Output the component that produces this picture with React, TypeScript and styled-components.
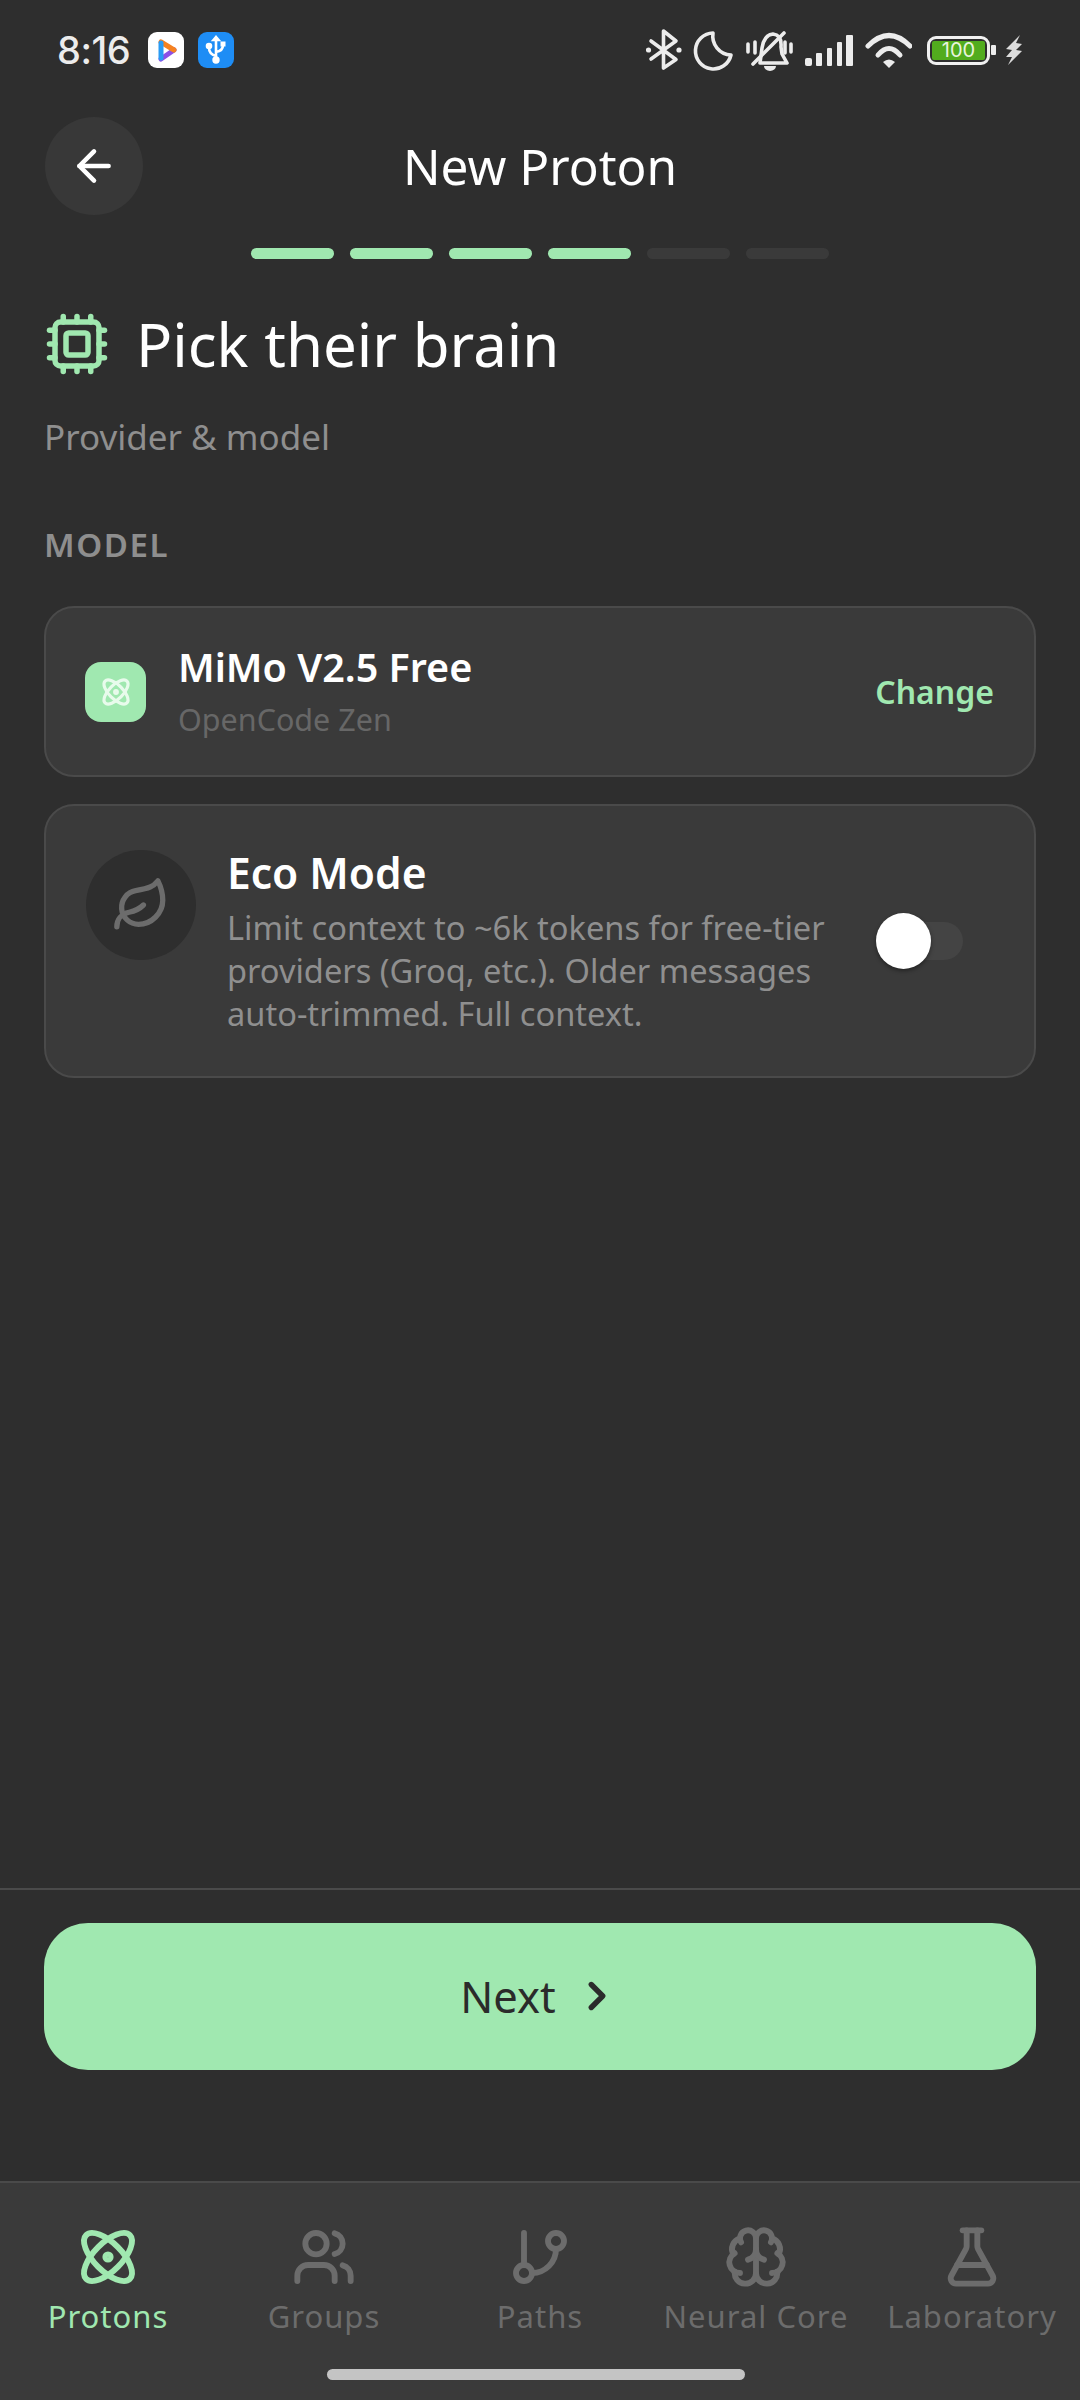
import React from "react";
import styled, { createGlobalStyle } from "styled-components";
import { ArrowLeft, ChevronRight, Cpu, Atom, Users, GitBranch, Brain, FlaskConical, Leaf } from "lucide-react";

const Global = createGlobalStyle`
  html, body { margin: 0; padding: 0; background: #2e2e2e; }
  * { box-sizing: border-box; }
`;

const FONT = `"Noto Sans", "Open Sans", sans-serif`;
const GREEN = "#a0e8b0";

const Page = styled.div`
  width: 1080px;
  height: 2400px;
  background: #2e2e2e;
  display: flex;
  flex-direction: column;
  font-family: ${FONT};
  color: #fff;
  overflow: hidden;
`;

const StatusBar = styled.div`
  height: 100px;
  padding: 0 57px;
  display: flex;
  align-items: center;
  justify-content: space-between;
`;
const StatusLeft = styled.div`
  display: flex;
  align-items: center;
`;
const Time = styled.span`
  font-family: "Inter", sans-serif;
  font-size: 38px;
  font-weight: 500;
  letter-spacing: -0.5px;
  color: #ececec;
  width: 91px;
`;
const AppBadge = styled.div<{ $bg: string; $gap: number }>`
  width: 36px;
  height: 36px;
  border-radius: 9px;
  background: ${(p) => p.$bg};
  margin-right: ${(p) => p.$gap}px;
  display: flex;
  align-items: center;
  justify-content: center;
`;
const StatusIconRow = styled.div`
  display: flex;
  align-items: center;
`;
const Battery = styled.div`
  display: flex;
  width: 63px;
  height: 29px;
  margin-left: 15px;
  padding: 2px;
  border: 3px solid #f0f0f0;
  border-radius: 9px;
`;
const BatteryFill = styled.div`
  flex: 1;
  background: #52ac1e;
  border-radius: 2px;
  color: #e9f4dd;
  font-family: "Inter", sans-serif;
  font-size: 20px;
  line-height: 19px;
  text-align: center;
`;
const BatteryNub = styled.div`
  width: 5px;
  height: 10px;
  margin-left: 1px;
  margin-right: 9px;
  border-radius: 1px;
  background: #ececec;
`;

const Header = styled.div`
  height: 100px;
  padding: 17px 45px 0;
  display: flex;
  align-items: flex-start;
`;
const BackBtn = styled.div`
  width: 98px;
  height: 98px;
  border-radius: 50%;
  background: #383838;
  display: flex;
  align-items: center;
  justify-content: center;
  flex-shrink: 0;
`;
const HeaderTitle = styled.div`
  flex: 1;
  text-align: center;
  font-size: 49.5px;
  line-height: 66px;
  font-weight: 400;
  margin-top: 16px;
  margin-right: 98px;
`;

const Steps = styled.div`
  display: flex;
  justify-content: center;
  gap: 16px;
  margin-top: 48px;
`;
const Step = styled.div<{ $on?: boolean }>`
  width: 83px;
  height: 11px;
  border-radius: 6px;
  background: ${(p) => (p.$on ? GREEN : "#3a3a3a")};
`;

const Content = styled.div`
  flex: 1;
  padding: 0 44px;
  display: flex;
  flex-direction: column;
`;
const TitleRow = styled.div`
  display: flex;
  align-items: center;
  gap: 26px;
  margin-top: 47px;
  height: 76px;
`;
const Title = styled.h1`
  margin: 0;
  font-size: 60px;
  line-height: 76px;
  font-weight: 400;
`;
const Subtitle = styled.p`
  margin: 31px 0 0;
  font-size: 35px;
  line-height: 48px;
  color: #8f8f8f;
`;
const Section = styled.div`
  margin-top: 64px;
  font-size: 33px;
  line-height: 40px;
  font-weight: 600;
  letter-spacing: 1.6px;
  color: #8e8e8e;
`;
const Card = styled.div`
  border: 2px solid #4a4a4a;
  border-radius: 30px;
  background: #3a3a3a;
`;
const ModelCard = styled(Card)`
  margin-top: 41px;
  height: 171px;
  padding: 0 40px 0 39px;
  display: flex;
  align-items: center;
`;
const ModelIcon = styled.div`
  width: 61px;
  height: 60px;
  border-radius: 16px;
  background: ${GREEN};
  display: flex;
  align-items: center;
  justify-content: center;
  flex-shrink: 0;
`;
const ModelText = styled.div`
  flex: 1;
  margin-left: 32px;
  padding-bottom: 3px;
`;
const ModelName = styled.div`
  font-size: 39.5px;
  line-height: 50px;
  font-weight: 600;
`;
const ModelProvider = styled.div`
  font-size: 30.5px;
  line-height: 40px;
  margin-top: 7px;
  color: #676767;
`;
const ChangeLink = styled.div`
  font-size: 32px;
  font-weight: 600;
  color: ${GREEN};
`;
const EcoCard = styled(Card)`
  margin-top: 27px;
  height: 274px;
  padding: 44px 40px 0;
  display: flex;
  align-items: flex-start;
`;
const EcoIcon = styled.div`
  width: 110px;
  height: 110px;
  border-radius: 50%;
  background: #2e2e2e;
  display: flex;
  align-items: center;
  justify-content: center;
  flex-shrink: 0;
`;
const EcoText = styled.div`
  width: 652px;
  margin-left: 31px;
  margin-top: -2px;
`;
const EcoName = styled.div`
  font-size: 42.5px;
  line-height: 50px;
  font-weight: 600;
`;
const EcoDesc = styled.div`
  font-size: 32.6px;
  line-height: 43px;
  color: #8f8f8f;
  margin-top: 8px;
`;
const Toggle = styled.div`
  position: relative;
  width: 84px;
  height: 38px;
  margin-top: 72px;
  border-radius: 19px;
  background: #444444;
`;
const Knob = styled.div`
  position: absolute;
  left: -3px;
  top: -9px;
  width: 55px;
  height: 56px;
  border-radius: 50%;
  background: #fff;
  box-shadow: 0 2px 4px rgba(0, 0, 0, 0.4);
`;

const Footer = styled.div`
  height: 293px;
  border-top: 2px solid #4a4a4a;
  padding: 33px 44px 0;
`;
const NextBtn = styled.div`
  height: 147px;
  padding-bottom: 2px;
  border-radius: 44px;
  background: ${GREEN};
  display: flex;
  align-items: center;
  justify-content: center;
  gap: 18px;
  color: #2b2b2b;
  font-size: 43.5px;
`;

const TabBar = styled.div`
  height: 219px;
  border-top: 2px solid #4a4a4a;
  background: #3a3a3a;
  position: relative;
  display: grid;
  grid-template-columns: repeat(5, 216px);
  padding-top: 42px;
`;
const Tab = styled.div<{ $on?: boolean }>`
  display: flex;
  flex-direction: column;
  align-items: center;
  color: ${(p) => (p.$on ? GREEN : "#6c6c6c")};
`;
const TabLabel = styled.div`
  font-size: 31px;
  line-height: 40px;
  margin-top: 7px;
  letter-spacing: 1px;
  white-space: nowrap;
`;
const HomeBar = styled.div`
  position: absolute;
  left: 327px;
  bottom: 20px;
  width: 418px;
  height: 11px;
  border-radius: 6px;
  background: #c4c4c4;
`;

const StatusIcons = () => (
  <svg width="266" height="60" viewBox="0 0 266 60" fill="none">
    <g stroke="#ececec" strokeWidth="3.6" strokeLinecap="round" strokeLinejoin="round">
      <path d="M5 21 L30 39.5 L17.5 48 V11 L30 21 L5 39" />
      <path d="M67 13 A18 18 0 1 0 85 35 A19 19 0 0 1 67 13 Z" />
      <path d="M114 43 L116 28 Q118 15 127 14 Q136 15 135 27 L136 34 L141 43 H114" />
      <path d="M138 13 L107 44" />
      <path d="M102 24 V32 M109 22 V33 M139 22 V33 M145 24 V32" />
    </g>
    <path d="M118 46 H130 A6 5 0 0 1 118 46 Z" fill="#ececec" />
    <circle cx="2.5" cy="30" r="2.6" fill="#ececec" />
    <circle cx="33" cy="30" r="2.6" fill="#ececec" />
    <g fill="#ececec">
      <rect x="159" y="38" width="7" height="8" rx="2" />
      <rect x="170" y="33" width="6" height="13" rx="1" />
      <rect x="181" y="28" width="5" height="18" rx="1" />
      <rect x="191" y="22" width="5" height="24" rx="1" />
      <rect x="200" y="15" width="7" height="31" rx="1" />
    </g>
    <g stroke="#ececec" strokeWidth="5" strokeLinecap="round" fill="none">
      <path d="M222 26 Q243 5 264 26" />
      <path d="M232 35 Q243 22 254 35" />
    </g>
    <path d="M237 42 Q243 37 249 42 L243 48 Z" fill="#ececec" />
  </svg>
);

const tabs = [
  { label: "Protons", Icon: Atom, on: true },
  { label: "Groups", Icon: Users },
  { label: "Paths", Icon: GitBranch },
  { label: "Neural Core", Icon: Brain },
  { label: "Laboratory", Icon: FlaskConical },
];

export default function App() {
  return (
    <Page>
      <Global />
      <StatusBar>
        <StatusLeft>
          <Time>8:16</Time>
          <AppBadge $bg="#fff" $gap={14}>
            <svg width="36" height="36" viewBox="0 0 36 36" fill="none" strokeWidth="5" strokeLinecap="round">
              <path d="M13 27 L26 18" stroke="#8c4fe6" />
              <path d="M13 10 L26 18" stroke="#f58220" />
              <path d="M13 11 V26" stroke="#2a9bf4" />
            </svg>
          </AppBadge>
          <AppBadge $bg="#1e8df5" $gap={0}>
            <svg width="24" height="32" viewBox="0 0 24 32" fill="none" stroke="#fff" strokeWidth="2.6" strokeLinecap="round">
              <path d="M12 5 V26 M12 22 Q5 20 5 14 M12 18 Q19 17 19 11" />
              <circle cx="12" cy="26" r="2.4" fill="#fff" />
              <path d="M9.5 6 L12 3 L14.5 6 Z" fill="#fff" />
              <circle cx="5" cy="12" r="2" fill="#fff" />
              <rect x="17" y="8" width="4" height="4" fill="#fff" strokeWidth="1" />
            </svg>
          </AppBadge>
        </StatusLeft>
        <StatusIconRow>
          <StatusIcons />
          <Battery>
            <BatteryFill>100</BatteryFill>
          </Battery>
          <BatteryNub />
          <svg width="18" height="30" viewBox="0 0 18 30">
            <path d="M15 0 L1 14 L7 15 L1 22 L7 22 L3 30 L17 16 L11 15 L17 9 L11 8 Z" fill="#dcdcdc" />
          </svg>
        </StatusIconRow>
      </StatusBar>
      <Header>
        <BackBtn>
          <ArrowLeft size={50} color="#fff" strokeWidth={2.2} />
        </BackBtn>
        <HeaderTitle>New Proton</HeaderTitle>
      </Header>
      <Steps>
        <Step $on />
        <Step $on />
        <Step $on />
        <Step $on />
        <Step />
        <Step />
      </Steps>
      <Content>
        <TitleRow>
          <Cpu size={66} color={GREEN} strokeWidth={2} />
          <Title>Pick their brain</Title>
        </TitleRow>
        <Subtitle>Provider &amp; model</Subtitle>
        <Section>MODEL</Section>
        <ModelCard>
          <ModelIcon>
            <Atom size={32} color="#e8fbec" strokeWidth={2.4} />
          </ModelIcon>
          <ModelText>
            <ModelName>MiMo V2.5 Free</ModelName>
            <ModelProvider>OpenCode Zen</ModelProvider>
          </ModelText>
          <ChangeLink>Change</ChangeLink>
        </ModelCard>
        <EcoCard>
          <EcoIcon>
            <Leaf size={58} color="#6c6c6c" strokeWidth={2.2} />
          </EcoIcon>
          <EcoText>
            <EcoName>Eco Mode</EcoName>
            <EcoDesc>
              Limit context to ~6k tokens for free-tier providers (Groq, etc.). Older messages auto-trimmed. Full context.
            </EcoDesc>
          </EcoText>
          <Toggle>
            <Knob />
          </Toggle>
        </EcoCard>
      </Content>
      <Footer>
        <NextBtn>
          Next
          <ChevronRight size={46} strokeWidth={2.8} />
        </NextBtn>
      </Footer>
      <TabBar>
        {tabs.map(({ label, Icon, on }) => (
          <Tab key={label} $on={on}>
            <Icon size={64} strokeWidth={2.2} />
            <TabLabel>{label}</TabLabel>
          </Tab>
        ))}
        <HomeBar />
      </TabBar>
    </Page>
  );
}
